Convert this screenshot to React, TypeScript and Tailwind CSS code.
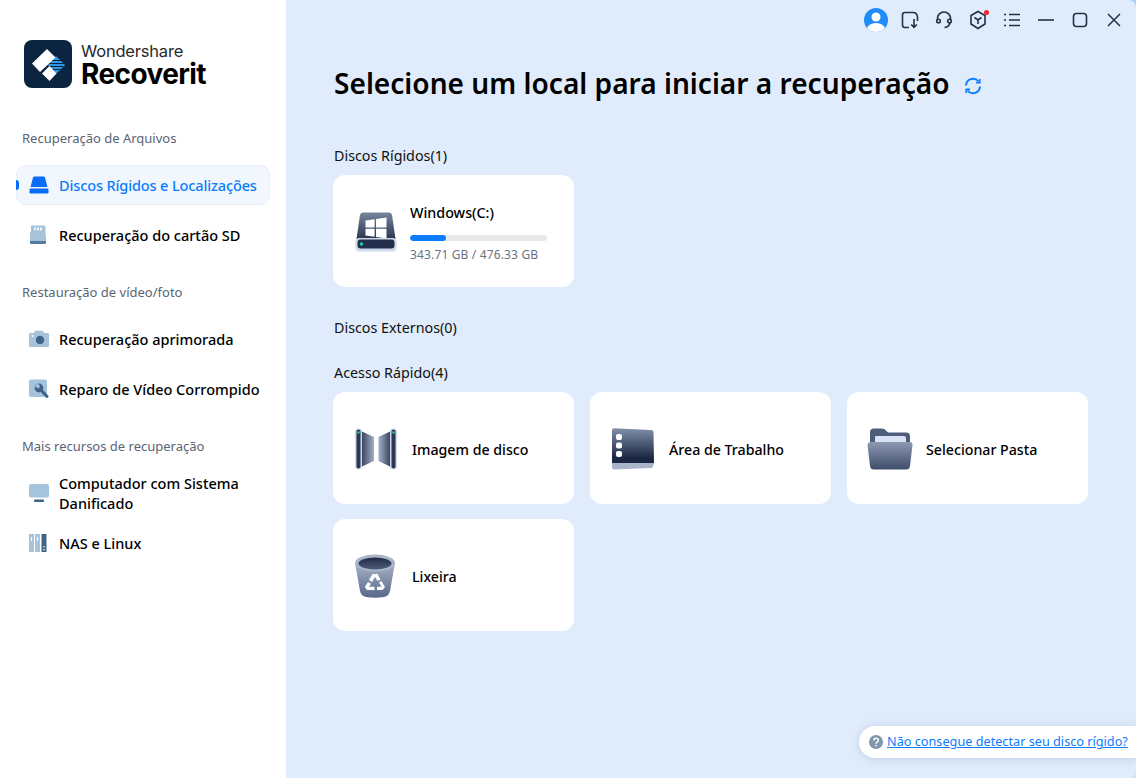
import { ReactNode } from "react";

const font = { fontFamily: '"Noto Sans", "Open Sans", sans-serif' };

const LogoIcon = () => (
  <svg width="48" height="48" viewBox="0 0 48 48">
    <rect width="48" height="48" rx="8" fill="#0b2541" />
    <path d="M32 16 L41 25 L32.500 33.500 L24 25 Z" fill="#2f97e6" />
    <path d="M26 20.500H37M25 23.500H40M26 26.500H39M28 29.500H36" stroke="#0b2541" strokeWidth="1" />
    <path d="M8 23.500 L23 9 L31.500 17.500 L16 32 Z" fill="#fff" />
    <path d="M18 33.500 L25.500 26 L32.500 33.500 L25.500 41 Z" fill="#fff" />
  </svg>
);

const HddIcon = () => (
  <svg width="20" height="18" viewBox="0 0 20 18">
    <path d="M4 1.500 Q4.200 0.500 5.500 0.500 H14.500 Q15.800 0.500 16 1.500 L18.500 11 H1.500 Z" fill="#0a6cf5" />
    <rect x="0.500" y="12.500" width="19" height="5" rx="1.200" fill="#0a6cf5" />
  </svg>
);

const SdIcon = () => (
  <svg width="18" height="20" viewBox="0 0 18 20">
    <path d="M3 0.500 H15.500 Q16.500 0.500 16.500 1.500 V10 L17 11 V17 H1 V8 L2 6.500 V1.500 Q2 0.500 3 0.500Z" fill="#a5c3db" />
    <path d="M6 2.500v3M9 2.500v3M12 2.500v3" stroke="#fff" strokeWidth="1.600" />
    <path d="M1 16 H17 V18 Q17 19 16 19 H2 Q1 19 1 18 Z" fill="#557a9c" />
  </svg>
);

const CameraIcon = () => (
  <svg width="20" height="18" viewBox="0 0 20 18">
    <path d="M1.500 3 H5 L6 0.800 H14 L15 3 H18.500 Q20 3 20 4.500 V15.500 Q20 17 18.500 17 H1.500 Q0 17 0 15.500 V4.500 Q0 3 1.500 3Z" fill="#a5c3db" />
    <circle cx="11" cy="10" r="4.200" fill="#3f6485" />
    <circle cx="3.500" cy="6" r="1" fill="#fff" />
  </svg>
);

const RepairIcon = () => (
  <svg width="20" height="20" viewBox="0 0 20 20">
    <rect y="0.500" width="18" height="17.500" rx="2" fill="#a5c3db" />
    <circle cx="10" cy="9" r="4.400" fill="#3f6485" />
    <path d="M9 4 L11 7.500 L9.500 9.500 L6 7.500" fill="#a5c3db" />
    <path d="M12 11 L18 17.500" stroke="#3f6485" strokeWidth="3" strokeLinecap="round" />
  </svg>
);

const MonitorIcon = () => (
  <svg width="20" height="18" viewBox="0 0 20 18">
    <rect y="0" width="20" height="13.500" rx="2" fill="#a5c3db" />
    <rect x="5" y="15.500" width="10" height="2.500" rx="1" fill="#3f6485" />
  </svg>
);

const NasIcon = () => (
  <svg width="18" height="18" viewBox="0 0 18 18">
    <rect x="0" width="5" height="18" fill="#a5c3db" />
    <rect x="6" width="5" height="18" fill="#a5c3db" />
    <rect x="12.500" width="5" height="18" fill="#3f6485" />
    <path d="M2.500 3v4M8.500 3v4" stroke="#fff" strokeWidth="1.200" />
    <path d="M15 12v1.400M15 15v1.400" stroke="#fff" strokeWidth="1.200" />
  </svg>
);

const WindowsDriveIcon = () => (
  <svg width="42" height="40" viewBox="0 0 42 40">
    <defs>
      <linearGradient id="wd" x1="0" y1="0" x2="0" y2="1">
        <stop offset="0" stopColor="#76859e" />
        <stop offset="1" stopColor="#2b3650" />
      </linearGradient>
    </defs>
    <path d="M5 3 Q5.400 0.500 8 0.500 H34 Q36.600 0.500 37 3 L40.500 27 H1.500 Z" fill="url(#wd)" />
    <path d="M10.500 8.500 L19.600 7.200 V15.400 H10.500 Z M21 7 L31.500 5.500 V15.400 H21 Z M10.500 16.700 H19.600 V24.800 L10.500 23.500 Z M21 16.700 H31.500 V26.500 L21 25 Z" fill="#fff" />
    <rect x="0.500" y="26" width="41" height="13.500" rx="4" fill="#cfd9ec" />
    <rect x="2.500" y="27.500" width="37" height="9" rx="3" fill="#232e4d" />
    <circle cx="6.500" cy="32" r="1.700" fill="#22d39a" />
  </svg>
);

const ImageDiskIcon = () => (
  <svg width="44" height="42" viewBox="0 0 44 42">
    <defs>
      <linearGradient id="idl" x1="0" y1="0" x2="1" y2="0">
        <stop offset="0" stopColor="#3a4763" />
        <stop offset="1" stopColor="#a3afc3" />
      </linearGradient>
      <linearGradient id="idr" x1="1" y1="0" x2="0" y2="0">
        <stop offset="0" stopColor="#3a4763" />
        <stop offset="1" stopColor="#a3afc3" />
      </linearGradient>
    </defs>
    <path d="M8 3.500 L20 9 V33 L8 38.500 Z" fill="url(#idl)" />
    <path d="M36 3.500 L24.500 9 V33 L36 38.500 Z" fill="url(#idr)" />
    <rect x="1" y="0.500" width="7" height="41" rx="3" fill="#cfd9ec" />
    <rect x="2.500" y="1.500" width="4" height="39" rx="2" fill="#2a3653" />
    <rect x="36" y="0.500" width="7" height="41" rx="3" fill="#cfd9ec" />
    <rect x="37.500" y="1.500" width="4" height="39" rx="2" fill="#2a3653" />
    <circle cx="4.500" cy="4.500" r="1.200" fill="#22d39a" />
    <circle cx="39.500" cy="4.500" r="1.200" fill="#22d39a" />
  </svg>
);

const DesktopIcon = () => (
  <svg width="44" height="42" viewBox="0 0 44 42">
    <defs>
      <linearGradient id="dk" x1="0" y1="0" x2="0" y2="1">
        <stop offset="0" stopColor="#8190a8" />
        <stop offset="0.850" stopColor="#1c2745" />
      </linearGradient>
    </defs>
    <path d="M3 0.300 L40 2 Q42.500 2 42.500 4.500 L43 35 L1 35 V2 Q1 0.300 3 0.300Z" fill="url(#dk)" />
    <path d="M1 35 H43 L42 38.500 Q41.500 40 39.500 40 L3 41.500 Q1 41.500 1 39.500 Z" fill="#a9b6ca" />
    <rect x="5" y="6" width="6" height="6" rx="2" fill="#fff" />
    <rect x="5" y="14.500" width="6" height="6" rx="2" fill="#fff" />
    <rect x="5" y="23" width="6" height="6" rx="2" fill="#fff" />
  </svg>
);

const FolderIcon = () => (
  <svg width="46" height="42" viewBox="0 0 46 42" className="-ml-[1px]">
    <defs>
      <linearGradient id="fo" x1="0" y1="0" x2="0" y2="1">
        <stop offset="0" stopColor="#8d99b2" />
        <stop offset="1" stopColor="#3f4d6b" />
      </linearGradient>
    </defs>
    <path d="M3 4 Q3 0.500 7 0.500 H15 Q18 0.500 19.500 3 L21 4.500 H39 Q43 4.500 43 8.500 V20 H3 Z" fill="#4e5d7c" />
    <path d="M8 9 Q8 8 9 8 H37 Q39 8 39 10 V20 H8 Z" fill="#d9e3f4" />
    <path d="M0.500 17 Q0.500 14.500 3 14 L43 14 Q45.500 14 45.500 17 L43 38 Q42.500 41.500 39 41.500 H7 Q3.500 41.500 3 38 Z" fill="url(#fo)" />
  </svg>
);

const TrashIcon = () => (
  <svg width="42" height="44" viewBox="0 0 42 44">
    <defs>
      <linearGradient id="tr" x1="0" y1="0" x2="0" y2="1">
        <stop offset="0" stopColor="#a9b4c8" />
        <stop offset="1" stopColor="#58678a" />
      </linearGradient>
      <linearGradient id="tm" x1="0" y1="0" x2="0" y2="1">
        <stop offset="0" stopColor="#1f2a45" />
        <stop offset="1" stopColor="#4e5d7c" />
      </linearGradient>
    </defs>
    <path d="M1 9 L6 37 Q7 42 12 43 Q21 44.500 30 43 Q35 42 36 37 L41 9 Z" fill="url(#tr)" />
    <ellipse cx="21" cy="9" rx="20" ry="8.500" fill="#aab5c9" />
    <ellipse cx="21" cy="9.500" rx="16.500" ry="6" fill="url(#tm)" />
    <path d="M18.500 20 H23.500 L26.500 25.500 L23.500 27 L21 22.800 L18 28 L15 26 Z M27.500 27 L31 33 L28.500 36 H23 V32.800 H27.500 L25 28.500 Z M14 28 L17 29.800 L15 32.800 H20.500 V36 H13 L10.800 33 Z" fill="#fff" />
  </svg>
);

const SyncIcon = () => (
  <svg width="18" height="18" viewBox="0 0 18 18" fill="none" stroke="#0a7cff" strokeWidth="2">
    <path d="M2 8.500 A7 7 0 0 1 14.500 4.500" />
    <path d="M16 9.500 A7 7 0 0 1 3.500 13.500" />
    <path d="M15.800 2 V5.800 H12" strokeWidth="1.600" />
    <path d="M2.200 16 V12.200 H6" strokeWidth="1.600" />
  </svg>
);

const TopBar = () => (
  <div className="flex items-center justify-end h-[40px] pr-[14px] text-[#22304a]">
    <svg width="24" height="24" viewBox="0 0 24 24" className="mr-[13px]">
      <defs>
        <clipPath id="av"><circle cx="12" cy="12" r="12" /></clipPath>
      </defs>
      <circle cx="12" cy="12" r="12" fill="#1f8cfa" />
      <g clipPath="url(#av)">
        <circle cx="12" cy="9" r="4.500" fill="#fff" />
        <ellipse cx="12" cy="21" rx="9" ry="6" fill="#fff" />
      </g>
    </svg>
    <svg width="18" height="18" viewBox="0 0 18 18" fill="none" stroke="currentColor" strokeWidth="1.600" className="mr-[16px]">
      <path d="M8 16.500 H4 Q1.500 16.500 1.500 14 V4 Q1.500 1.500 4 1.500 H12 Q16 1.500 16.500 6 V10" />
      <path d="M13 8 V16 M10.200 13.500 L13 16.300 L15.800 13.500" />
    </svg>
    <svg width="18" height="18" viewBox="0 0 18 18" fill="none" stroke="currentColor" strokeWidth="1.600" className="mr-[16px]">
      <path d="M2.500 9 V7.500 A6.500 6.500 0 0 1 15.500 7.500 V9" />
      <circle cx="3.500" cy="10" r="1.800" />
      <circle cx="14.500" cy="10" r="1.800" />
      <path d="M15 12 Q14 16 9.500 16.500" />
    </svg>
    <div className="relative mr-[16px]">
      <svg width="18" height="20" viewBox="0 0 18 20" fill="none" stroke="currentColor" strokeWidth="1.600">
        <path d="M9 1.500 L16 5.500 V14 L9 18.500 L2 14 V5.500 Z" />
        <path d="M5.500 7.500 L9 10 L12.500 7.500 M9 10 V14" />
      </svg>
      <span className="absolute top-[0px] right-[-2px] w-[5px] h-[5px] rounded-full bg-[#f5222d]" />
    </div>
    <svg width="18" height="16" viewBox="0 0 18 16" fill="none" stroke="currentColor" strokeWidth="1.600" className="mr-[17px]">
      <path d="M1 2.500 H3 M6 2.500 H17 M1 8 H3 M6 8 H17 M1 13.500 H3 M6 13.500 H17" />
    </svg>
    <svg width="16" height="16" viewBox="0 0 16 16" fill="none" stroke="currentColor" strokeWidth="1.600" className="mr-[18px]">
      <path d="M0 8 H16" />
    </svg>
    <svg width="16" height="16" viewBox="0 0 16 16" fill="none" stroke="currentColor" strokeWidth="1.600" className="mr-[18px]">
      <rect x="1.500" y="1.500" width="13" height="13" rx="3" />
    </svg>
    <svg width="16" height="16" viewBox="0 0 16 16" fill="none" stroke="currentColor" strokeWidth="1.500">
      <path d="M2 2 L14 14 M14 2 L2 14" />
    </svg>
  </div>
);

const NavItem = ({ icon, label, active }: { icon: ReactNode; label: ReactNode; active?: boolean }) => (
  <div
    className={`relative flex items-center h-[40px] ml-[16px] w-[254px] rounded-[10px] border text-[14.500px] font-medium leading-[20px] ${
      active ? "bg-[#f2f7fe] border-[#e6eef9] text-[#0a7cff] tracking-[-0.13px]" : "border-transparent text-black"
    }`}
  >
    {active && <span className="absolute left-[-1px] top-[14px] w-[3px] h-[10px] rounded-r-sm bg-[#0a6cf5]" />}
    <span className="w-[42px] pl-[12px] flex items-center shrink-0">{icon}</span>
    <span>{label}</span>
  </div>
);

const SectionTitle = ({ children, className }: { children: ReactNode; className: string }) => (
  <div className={`pl-[22px] text-[13px] leading-[18px] text-[#5a6474] ${className}`}>{children}</div>
);

const Sidebar = () => (
  <aside className="w-[286px] shrink-0 bg-white flex flex-col pt-[40px]">
    <div className="flex items-center pl-[24px] h-[48px]">
      <LogoIcon />
      <div className="ml-[9px] flex flex-col text-black" style={{ fontFamily: '"Inter", sans-serif' }}>
        <span className="text-[16.500px] leading-[20px] text-[#2a2a2a] tracking-[-0.2px]">Wondershare</span>
        <span className="text-[28px] leading-[27px] font-bold tracking-[-0.6px]">Recoverit</span>
      </div>
    </div>
    <SectionTitle className="mt-[41px]">Recuperação de Arquivos</SectionTitle>
    <div className="mt-[18px] flex flex-col gap-[10px]">
      <NavItem active icon={<HddIcon />} label="Discos Rígidos e Localizações" />
      <NavItem icon={<SdIcon />} label="Recuperação do cartão SD" />
    </div>
    <SectionTitle className="mt-[28px]">Restauração de vídeo/foto</SectionTitle>
    <div className="mt-[18px] flex flex-col gap-[10px]">
      <NavItem icon={<CameraIcon />} label="Recuperação aprimorada" />
      <NavItem icon={<RepairIcon />} label="Reparo de Vídeo Corrompido" />
    </div>
    <SectionTitle className="mt-[28px]">Mais recursos de recuperação</SectionTitle>
    <div className="mt-[18px] flex flex-col">
      <NavItem icon={<MonitorIcon />} label={<>Computador com Sistema<br />Danificado</>} />
      <div className="h-[10px]" />
      <NavItem icon={<NasIcon />} label="NAS e Linux" />
    </div>
  </aside>
);

const Card = ({ icon, label }: { icon: ReactNode; label: string }) => (
  <div className="w-[241px] h-[112px] rounded-[12px] bg-white flex items-center pl-[21px]">
    <span className="w-[58px] pt-[2px] flex items-center shrink-0">{icon}</span>
    <span className="pt-[4px] text-[14.200px] font-medium text-black">{label}</span>
  </div>
);

const GroupLabel = ({ children, className }: { children: ReactNode; className: string }) => (
  <div className={`ml-[1px] text-[14.300px] leading-[20px] text-[#111] ${className}`}>{children}</div>
);

export default function App() {
  return (
    <div className="flex w-[1136px] h-[778px] overflow-hidden bg-gradient-to-b from-[#a8d0f2] to-[#d8e4f2]" style={font}>
      <Sidebar />
      <main className="relative flex-1 flex flex-col bg-[#e0ecfb] rounded-r-[8px]">
        <TopBar />
        <div className="pl-[47px] flex flex-col">
          <div className="flex items-center ml-[1px] mt-[24px] h-[38px]">
            <h1 className="text-[28.100px] font-semibold text-black leading-[38px]">Selecione um local para iniciar a recuperação</h1>
            <span className="ml-[14px] mt-[5px]"><SyncIcon /></span>
          </div>
          <GroupLabel className="mt-[44px]">Discos Rígidos(1)</GroupLabel>
          <div className="mt-[9px] w-[241px] h-[112px] rounded-[12px] bg-white flex items-center pl-[22px] pr-[27px]">
            <span className="shrink-0 w-[55px] pt-[1px]"><WindowsDriveIcon /></span>
            <div className="flex-1 pt-[5px]">
              <div className="text-[14.300px] font-medium text-black leading-[20px]">Windows(C:)</div>
              <div className="mt-[12px] h-[6px] rounded-full bg-[#e8e9eb] overflow-hidden">
                <div className="h-full w-[26%] rounded-full bg-[#0a7cff]" />
              </div>
              <div className="mt-[5px] text-[12px] leading-[18px] text-[#6b7280] tracking-[0.15px]">343.71 GB / 476.33 GB</div>
            </div>
          </div>
          <GroupLabel className="mt-[31px]">Discos Externos(0)</GroupLabel>
          <GroupLabel className="mt-[25px]">Acesso Rápido(4)</GroupLabel>
          <div className="mt-[9px] grid grid-cols-[241px_241px_241px] gap-x-[16px] gap-y-[15px]">
            <Card icon={<ImageDiskIcon />} label="Imagem de disco" />
            <Card icon={<DesktopIcon />} label="Área de Trabalho" />
            <Card icon={<FolderIcon />} label="Selecionar Pasta" />
            <Card icon={<TrashIcon />} label="Lixeira" />
          </div>
        </div>
        <div className="absolute right-0 bottom-[20px] h-[32px] w-[277px] pl-[10px] flex items-center gap-[4px] bg-white rounded-l-full shadow-[0_1px_8px_rgba(90,120,170,0.25)]">
          <svg width="14" height="14" viewBox="0 0 14 14">
            <circle cx="7" cy="7" r="7" fill="#8296ab" />
            <path d="M4.800 5.500 Q4.800 3.300 7 3.300 Q9.300 3.300 9.300 5.300 Q9.300 6.500 8 7.200 Q7 7.800 7 8.700" fill="none" stroke="#fff" strokeWidth="1.500" />
            <circle cx="7" cy="10.600" r="0.900" fill="#fff" />
          </svg>
          <a className="text-[12.700px] text-[#0a7cff] underline whitespace-nowrap">Não consegue detectar seu disco rígido?</a>
        </div>
      </main>
    </div>
  );
}
